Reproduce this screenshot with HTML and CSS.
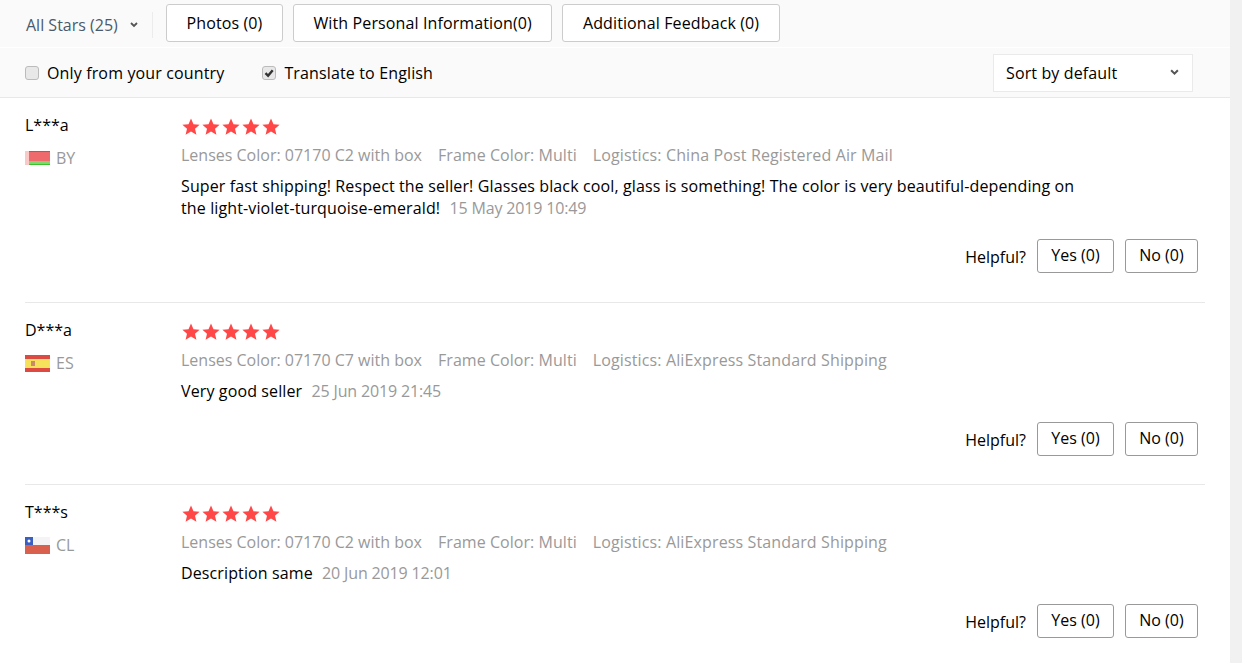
FILE: index.html
```html
<!DOCTYPE html>
<html lang="en">
<head>
  <meta charset="UTF-8">
  <title>Feedback</title>
  <link rel="stylesheet" href="styles.css">
</head>
<body>
<div class="page">
  <main class="main">
    <svg class="defs" width="0" height="0">
      <symbol id="star" viewBox="0 0 20 20"><path d="M10 1.6l2.5 5.6 6.1.6-4.6 4 1.4 6-5.4-3.2-5.4 3.2 1.4-6-4.6-4 6.1-.6z"/></symbol>
    </svg>

    <div class="filters">
      <div class="filter-row">
        <div class="all-stars">
          <span>All Stars (25)</span>
          <svg class="chevron" viewBox="0 0 8 6" width="8" height="6"><path d="M1 1l3 3 3-3" /></svg>
        </div>
        <button class="filter-button">Photos (0)</button>
        <button class="filter-button">With Personal Information(0)</button>
        <button class="filter-button">Additional Feedback (0)</button>
      </div>
      <div class="option-row">
        <label class="option"><span class="checkbox"></span>Only from your country</label>
        <label class="option option-translate">
          <span class="checkbox"><svg viewBox="0 0 12 12" width="12" height="12"><path d="M2.5 6.2l2.6 2.6 4.6-5.6"/></svg></span>Translate to English
        </label>
        <div class="sort-box">
          <span>Sort by default</span>
          <svg class="chevron" viewBox="0 0 8 6" width="9" height="7"><path d="M1 1l3 3 3-3" /></svg>
        </div>
      </div>
    </div>

    <section class="review review-first">
      <div class="buyer">
        <div class="buyer-name">L***a</div>
        <div class="buyer-country">
          <svg class="flag flag-short" viewBox="0 0 25 14"><rect width="25" height="14" fill="#ee6a6c"/><rect y="10" width="25" height="4" fill="#7fd66a"/><rect width="25" height="1" fill="#d9484c"/><rect y="13" width="25" height="1" fill="#3fc12f"/><rect width="4" height="14" fill="#f8c9c6"/></svg>
          BY
        </div>
      </div>
      <div class="feedback">
        <div class="stars"><svg><use href="#star"/></svg><svg><use href="#star"/></svg><svg><use href="#star"/></svg><svg><use href="#star"/></svg><svg><use href="#star"/></svg></div>
        <div class="meta"><span>Lenses Color: 07170 C2 with box</span><span>Frame Color: Multi</span><span>Logistics: China Post Registered Air Mail</span></div>
        <p class="text">Super fast shipping! Respect the seller! Glasses black cool, glass is something! The color is very beautiful-depending on the light-violet-turquoise-emerald! <time>15 May 2019 10:49</time></p>
        <div class="helpful"><span class="helpful-label">Helpful?</span><button class="vote-yes">Yes (0)</button><button class="vote-no">No (0)</button></div>
      </div>
    </section>

    <section class="review">
      <div class="buyer">
        <div class="buyer-name">D***a</div>
        <div class="buyer-country">
          <svg class="flag" viewBox="0 0 25 17"><rect width="25" height="17" fill="#dc4a42"/><rect y="4" width="25" height="9" fill="#f6e25a"/><rect x="6" y="6" width="4" height="5" fill="#c98a6a"/></svg>
          ES
        </div>
      </div>
      <div class="feedback">
        <div class="stars"><svg><use href="#star"/></svg><svg><use href="#star"/></svg><svg><use href="#star"/></svg><svg><use href="#star"/></svg><svg><use href="#star"/></svg></div>
        <div class="meta"><span>Lenses Color: 07170 C7 with box</span><span>Frame Color: Multi</span><span>Logistics: AliExpress Standard Shipping</span></div>
        <p class="text">Very good seller <time>25 Jun 2019 21:45</time></p>
        <div class="helpful"><span class="helpful-label">Helpful?</span><button class="vote-yes">Yes (0)</button><button class="vote-no">No (0)</button></div>
      </div>
    </section>

    <section class="review">
      <div class="buyer">
        <div class="buyer-name">T***s</div>
        <div class="buyer-country">
          <svg class="flag" viewBox="0 0 25 17"><rect width="25" height="17" fill="#f4f4f4"/><rect y="8" width="25" height="9" fill="#d9604c"/><rect width="8" height="8" fill="#3a5fc0"/><circle cx="4" cy="4" r="1.5" fill="#fff"/></svg>
          CL
        </div>
      </div>
      <div class="feedback">
        <div class="stars"><svg><use href="#star"/></svg><svg><use href="#star"/></svg><svg><use href="#star"/></svg><svg><use href="#star"/></svg><svg><use href="#star"/></svg></div>
        <div class="meta"><span>Lenses Color: 07170 C2 with box</span><span>Frame Color: Multi</span><span>Logistics: AliExpress Standard Shipping</span></div>
        <p class="text">Description same <time>20 Jun 2019 12:01</time></p>
        <div class="helpful"><span class="helpful-label">Helpful?</span><button class="vote-yes">Yes (0)</button><button class="vote-no">No (0)</button></div>
      </div>
    </section>
  </main>
  <div class="scrollbar"></div>
</div>
</body>
</html>
```

FILE: styles.css
```css
html, body {
  margin: 0;
  height: 663px;
  overflow: hidden;
  background-color: white;
  color: black;
  font-family: "Open Sans", Arial, sans-serif;
  font-size: 16px;
}

button {
  font-family: inherit;
  font-size: 16px;
  color: black;
  background-color: white;
  cursor: pointer;
}

.page {
  display: flex;
  height: 663px;
}

.main {
  flex: 1;
  min-width: 0;
}

.defs {
  position: absolute;
}

.scrollbar {
  width: 12px;
  background-color: #f1f1f1;
}

.filters {
  background-color: #fafafa;
  border-bottom: 1px solid #e8e8e8;
}

.filter-row {
  display: flex;
  align-items: flex-start;
  height: 48px;
  padding: 4px 0 0 26px;
  box-sizing: border-box;
  border-bottom: 1px solid white;
}

.all-stars {
  display: flex;
  align-items: center;
  width: 126px;
  height: 26px;
  margin: 8px 13px 0 0;
  border-right: 1px solid #ececec;
  color: #4b5a6b;
}

.all-stars span {
  margin-right: 12px;
}

.chevron {
  fill: none;
  stroke: #555;
  stroke-width: 1.8;
}

.filter-button {
  height: 38px;
  padding: 0 19.5px;
  margin-right: 10px;
  border: 1px solid #ccc;
  border-radius: 3px;
  letter-spacing: 0.12px;
}

.option-row {
  display: flex;
  align-items: center;
  height: 49px;
  padding-left: 25px;
}

.option {
  display: flex;
  align-items: center;
  letter-spacing: 0.14px;
}

.option-translate {
  margin-left: 38px;
}

.checkbox {
  display: flex;
  align-items: center;
  justify-content: center;
  width: 12px;
  height: 12px;
  margin-right: 8px;
  background-color: #e8e8e8;
  border: 1px solid #bbb;
  border-radius: 3px;
}

.checkbox path {
  fill: none;
  stroke: #333;
  stroke-width: 2.4;
}

.sort-box {
  display: flex;
  align-items: center;
  justify-content: space-between;
  box-sizing: border-box;
  width: 200px;
  height: 38px;
  margin-left: auto;
  margin-right: 37px;
  padding: 0 13px 0 12px;
  background-color: white;
  border: 1px solid #eaeaea;
  letter-spacing: 0.13px;
}

.review {
  display: flex;
  margin: 0 25px;
  padding-top: 15px;
  height: 182px;
  box-sizing: border-box;
  border-bottom: 1px solid #e8e8e8;
}

.review-first {
  height: 205px;
}

.buyer {
  width: 156px;
  flex-shrink: 0;
}

.buyer-name {
  margin-top: 1px;
  line-height: 22px;
}

.buyer-country {
  display: flex;
  align-items: center;
  margin-top: 11px;
  line-height: 22px;
  color: #999;
}

.flag {
  width: 25px;
  height: 17px;
  margin-right: 6px;
  filter: blur(0.4px);
}

.flag-short {
  height: 14px;
}

.feedback {
  flex: 1;
  min-width: 0;
}

.stars {
  display: flex;
  height: 20px;
  margin-top: 4px;
  fill: #ff4747;
}

.stars svg {
  width: 20px;
  height: 20px;
}

.meta {
  display: flex;
  margin-top: 7px;
  line-height: 22px;
  color: #999;
}

.meta span {
  margin-right: 16px;
}

.meta span:nth-child(2) {
  letter-spacing: 0.05px;
}

.meta span:nth-child(3) {
  letter-spacing: 0.13px;
}

.text {
  width: 900px;
  margin: 9px 0 0;
  line-height: 22px;
  letter-spacing: 0.12px;
}

.text time {
  margin-left: 5px;
  color: #999;
  letter-spacing: -0.15px;
}

.helpful {
  display: flex;
  align-items: center;
  justify-content: flex-end;
  margin: 20px 7px 0 0;
}

.helpful-label {
  margin-top: 2px;
}

.helpful button {
  height: 34px;
  padding: 0 0 2px;
  border: 1px solid #999;
  border-radius: 3px;
}

.vote-yes {
  width: 77px;
  margin-left: 11px;
}

.vote-no {
  width: 73px;
  margin-left: 11px;
}
```
